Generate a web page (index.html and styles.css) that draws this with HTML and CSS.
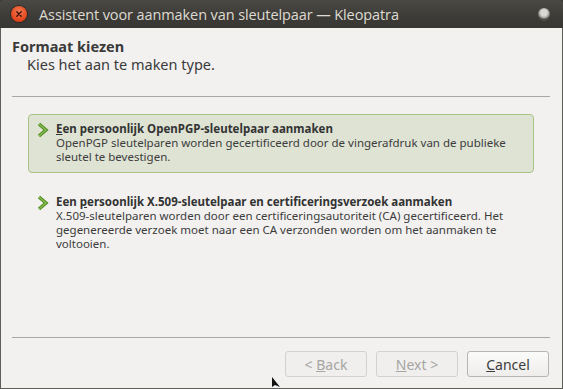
FILE: index.html
```html
<!DOCTYPE html>
<html>
<head>
<meta charset="utf-8">
<link rel="stylesheet" href="styles.css">
</head>
<body>
<div class="window">
  <div class="titlebar">
    <span class="close"><svg width="14" height="14" viewBox="0 0 14 14"><path d="M4.8 4.8 L9.2 9.2 M9.2 4.8 L4.8 9.2" stroke="#3a1008" stroke-width="1.3" stroke-linecap="round"/></svg></span>
    <span class="title">Assistent voor aanmaken van sleutelpaar — Kleopatra</span>
    <span class="spacer"></span>
    <span class="maxbtn"></span>
  </div>
  <div class="body">
    <div class="header">
      <div class="h-title">Formaat kiezen</div>
      <div class="h-sub">Kies het aan te maken type.</div>
    </div>
    <div class="sep"></div>
    <div class="options">
      <div class="option selected">
        <svg class="chev" width="12" height="16" viewBox="0 0 12 16"><path d="M2 2 L9 8 L2 14" fill="none" stroke="#4f8a22" stroke-width="3.4" stroke-linejoin="miter"/><path d="M2 2 L9 8 L2 14" fill="none" stroke="#8cc152" stroke-width="1.2" stroke-linejoin="miter"/></svg>
        <div class="opt-text">
          <div class="opt-title"><u>E</u>en persoonlijk OpenPGP-sleutelpaar aanmaken</div>
          <div class="opt-desc">OpenPGP sleutelparen worden gecertificeerd door de vingerafdruk van de publieke sleutel te bevestigen.</div>
        </div>
      </div>
      <div class="option">
        <svg class="chev" width="12" height="16" viewBox="0 0 12 16"><path d="M2 2 L9 8 L2 14" fill="none" stroke="#4f8a22" stroke-width="3.4" stroke-linejoin="miter"/><path d="M2 2 L9 8 L2 14" fill="none" stroke="#8cc152" stroke-width="1.2" stroke-linejoin="miter"/></svg>
        <div class="opt-text">
          <div class="opt-title">Een <u>p</u>ersoonlijk X.509-sleutelpaar en certificeringsverzoek aanmaken</div>
          <div class="opt-desc">X.509-sleutelparen worden door een certificeringsautoriteit (CA) gecertificeerd. Het gegenereerde verzoek moet naar een CA verzonden worden om het aanmaken te voltooien.</div>
        </div>
      </div>
    </div>
    <div class="grow"></div>
    <div class="sep bottom"></div>
    <div class="buttons">
      <button class="btn disabled">&lt; <u>B</u>ack</button>
      <button class="btn disabled"><u>N</u>ext &gt;</button>
      <button class="btn"><u>C</u>ancel</button>
    </div>
  </div>
  <svg class="cursor" width="10" height="12" viewBox="0 0 10 12"><path d="M0 0 L0 10 L3 8 L8 10 Z" fill="#111"/></svg>
</div>
</body>
</html>
```
FILE: styles.css
```css
* { box-sizing: border-box; }
html, body { margin: 0; padding: 0; }
body {
  width: 563px;
  height: 389px;
  overflow: hidden;
  background: #3c3b37;
  font-family: "Noto Sans", "DejaVu Sans", sans-serif;
}
.window {
  position: relative;
  width: 563px;
  height: 389px;
  display: flex;
  flex-direction: column;
  background: #5d5d5a;
  border-radius: 5px 5px 0 0;
  overflow: hidden;
}
.titlebar {
  height: 28px;
  flex: none;
  display: flex;
  align-items: center;
  padding: 0 11px 0 11px;
  background: linear-gradient(#4a4944, #3c3b37 60%, #383733);
  color: #dfdbd2;
}
.close {
  width: 16px;
  height: 16px;
  border-radius: 50%;
  background: radial-gradient(circle at 50% 35%, #f47a50, #e1431b 70%, #c7390f);
  display: flex;
  align-items: center;
  justify-content: center;
  box-shadow: 0 0 0 1px #2b2a27;
}
.close svg { display: block; }
.title {
  margin-left: 12px;
  font-family: "Open Sans", "Noto Sans", sans-serif;
  font-size: 14.5px;
  letter-spacing: -0.1px;
  white-space: nowrap;
}
.spacer { flex: 1; }
.maxbtn {
  width: 12px;
  height: 12px;
  border-radius: 50%;
  background: radial-gradient(circle at 50% 40%, #d8d8d4 35%, #9a9893 55%, #3a3935 75%);
  box-shadow: 0 1px 0 #55544f;
  margin-right: 2px;
}
.body {
  flex: 1;
  margin: 0 1px 1px 1px;
  background: #f2f1f0;
  display: flex;
  flex-direction: column;
  padding: 0 12px 0 11px;
  color: #3c3c3c;
  font-size: 11.5px;
}
.header { padding-top: 9px; height: 68px; }
.h-title { font-weight: bold; font-size: 14.5px; line-height: 18px; color: #3a3a3a; }
.h-sub { padding-left: 15px; font-size: 14.5px; line-height: 18px; color: #3a3a3a; }
.sep { height: 1px; background: #a9a7a4; flex: none; }
.options { padding: 17px 16px 0 16px; display: flex; flex-direction: column; gap: 14px; }
.option {
  display: flex;
  align-items: flex-start;
  padding: 7px 8px 8px 7px;
  border: 1px solid transparent;
  border-radius: 4px;
}
.option.selected {
  background: #dee3d3;
  border-color: #a7c385;
}
.chev { flex: none; margin-top: 0; margin-left: 1px; margin-right: 7px; }
.opt-text { flex: 1; line-height: 14px; }
.opt-title { font-weight: bold; color: #333; }
.opt-desc { color: #3c3c3c; }
.grow { flex: 1; }
.buttons {
  height: 50px;
  flex: none;
  display: flex;
  justify-content: flex-end;
  align-items: flex-start;
  gap: 9px;
  padding-top: 13px;
  padding-right: 1px;
}
.btn {
  width: 82px;
  height: 26px;
  border: 1px solid #b7b5b1;
  border-radius: 3px;
  background: linear-gradient(#fbfbfa, #eeedec);
  color: #3c3c3c;
  font-family: inherit;
  font-size: 14px;
  padding: 0;
}
.btn.disabled {
  color: #a6a5a2;
  border-color: #d3d1ce;
  background: #f0efee;
}
.cursor { position: absolute; left: 272px; top: 377px; }
```
